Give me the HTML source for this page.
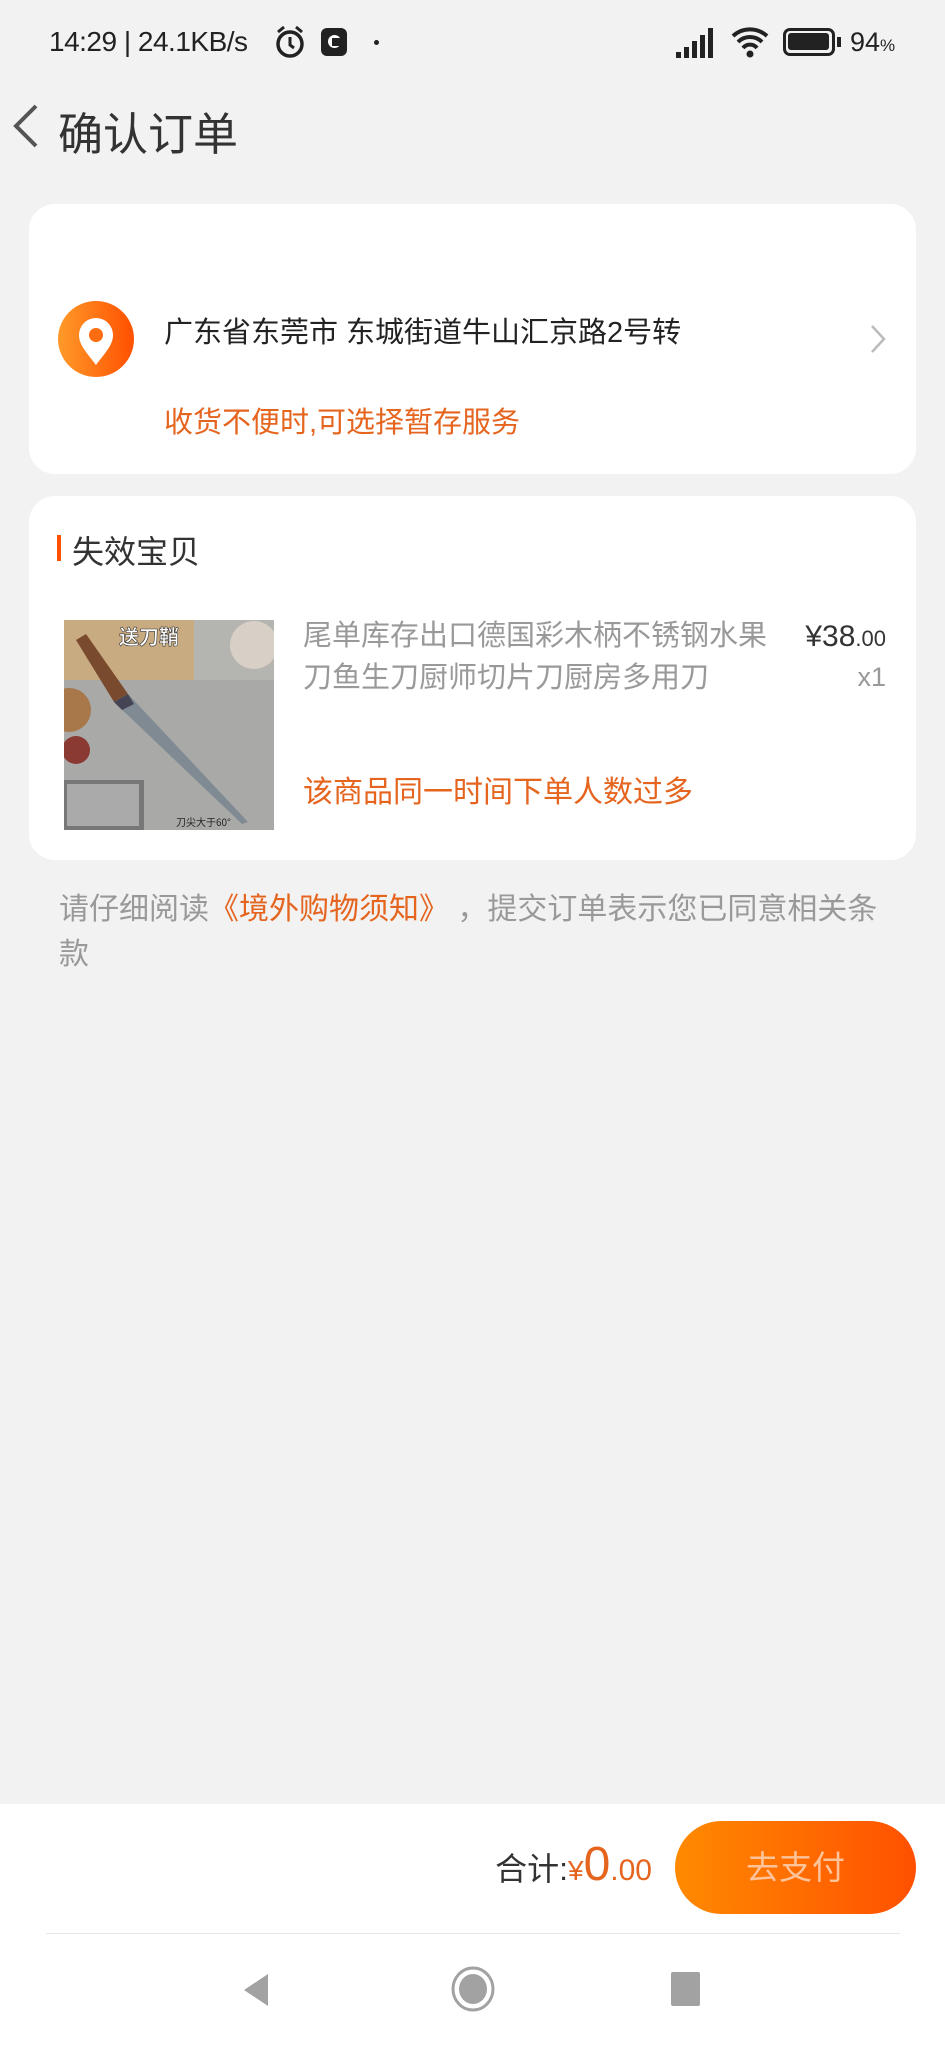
<!DOCTYPE html>
<html><head><meta charset="utf-8"><style>
*{margin:0;padding:0;box-sizing:border-box}
body{width:945px;height:2048px;background:#f2f2f2;font-family:"Liberation Sans","Noto Sans CJK SC",sans-serif;position:relative;overflow:hidden;color:#333}
.a{position:absolute;white-space:nowrap}
.card{position:absolute;left:29px;width:887px;background:#fff;border-radius:26px}
</style></head><body>
<div class="a" style="left:49px;top:26px;font-size:28px;color:#222;letter-spacing:-0.5px">14:29 | 24.1KB/s</div>
<svg class="a" style="left:272px;top:24px" width="40" height="36" viewBox="0 0 40 36"><circle cx="18" cy="20" r="12" fill="none" stroke="#222" stroke-width="3.5"/><path d="M18 13v8l4 3M6 8l6-5M30 8l-6-5" stroke="#222" stroke-width="3" fill="none"/></svg>
<div class="a" style="left:321px;top:28px;width:26px;height:28px;background:#222;border-radius:6px"><div style="position:absolute;left:7px;top:7px;width:13px;height:13px;border-radius:50%;background:#fff"></div><div style="position:absolute;left:11px;top:10px;width:9px;height:8px;background:#222"></div></div>
<div class="a" style="left:374px;top:40px;width:5px;height:5px;border-radius:50%;background:#222"></div>
<svg class="a" style="left:676px;top:28px" width="42" height="30" viewBox="0 0 42 30"><rect x="0" y="24" width="5" height="6" fill="#222"/><rect x="8" y="19" width="5" height="11" fill="#222"/><rect x="16" y="13" width="5" height="17" fill="#222"/><rect x="24" y="7" width="5" height="23" fill="#222"/><rect x="32" y="0" width="5" height="30" fill="#222"/></svg>
<svg class="a" style="left:730px;top:24px" width="40" height="36" viewBox="0 0 40 36"><path d="M3 12a25 25 0 0 1 34 0M8 18a17 17 0 0 1 24 0M13 24a9 9 0 0 1 14 0" stroke="#222" stroke-width="4" fill="none"/><circle cx="20" cy="30" r="3.5" fill="#222"/></svg>
<div class="a" style="left:783px;top:28px;width:52px;height:28px;border:3.5px solid #222;border-radius:7px"><div style="position:absolute;left:2px;top:2px;width:41px;height:17px;background:#222;border-radius:3px"></div></div>
<div class="a" style="left:837px;top:37px;width:4px;height:10px;background:#222"></div>
<div class="a" style="left:850px;top:27px;font-size:27px;color:#222">94<span style="font-size:17px">%</span></div>

<svg class="a" style="left:10px;top:102px" width="30" height="48" viewBox="0 0 30 48"><path d="M26 4L6 24l20 20" stroke="#555" stroke-width="4" fill="none"/></svg>
<div class="a" style="left:58px;top:98px;font-size:45px;color:#333">确认订单</div>

<div class="card" style="top:204px;height:270px"></div>
<svg class="a" style="left:57px;top:300px" width="78" height="78" viewBox="0 0 78 78"><defs><linearGradient id="g" x1="0" x2="1"><stop offset="0" stop-color="#ff9a2a"/><stop offset="1" stop-color="#ff5000"/></linearGradient></defs><circle cx="39" cy="39" r="38" fill="url(#g)"/><path d="M39 65C30 53 22 45 22 35a17 17 0 0 1 34 0c0 10-8 18-17 30z" fill="#fff"/><circle cx="39" cy="35" r="7" fill="#ff6d10"/></svg>
<div class="a" style="left:164px;top:309px;font-size:29px;color:#222">广东省东莞市 东城街道牛山汇京路2号转</div>
<svg class="a" style="left:869px;top:323px" width="18" height="32" viewBox="0 0 18 32"><path d="M3 3l12 13L3 29" stroke="#bbb" stroke-width="2.5" fill="none"/></svg>
<div class="a" style="left:164px;top:399px;font-size:29px;color:#e5651f">收货不便时,可选择暂存服务</div>

<div class="card" style="top:496px;height:364px"></div>
<div class="a" style="left:57px;top:535px;width:4px;height:26px;background:#ff5000"></div>
<div class="a" style="left:72px;top:527px;font-size:32px;color:#333">失效宝贝</div>
<svg class="a" style="left:64px;top:620px" width="210" height="210" viewBox="0 0 210 210"><rect width="210" height="210" fill="#b4b4b0"/><rect x="0" y="0" width="130" height="60" fill="#c9ab82"/><rect x="0" y="60" width="210" height="150" fill="#a9aaa8"/><circle cx="190" cy="25" r="24" fill="#d8cfc6"/><circle cx="5" cy="90" r="22" fill="#a8774a"/><circle cx="12" cy="130" r="14" fill="#8a3a32"/><path d="M12 20l10-6 42 60-14 8z" fill="#7a4a2e"/><path d="M50 82l14-8 120 128-6 2z" fill="#7f8a92"/><path d="M64 74l-14 8 8 8 12-6z" fill="#445"/><rect x="0" y="160" width="80" height="50" fill="#555" opacity=".6"/><rect x="3" y="164" width="72" height="42" fill="#ddd" opacity=".5"/><text x="55" y="24" font-size="20" fill="#fff" font-family="Noto Sans CJK SC" font-weight="bold" stroke="#333" stroke-width=".6">送刀鞘</text><text x="112" y="206" font-size="10" fill="#222" font-family="Noto Sans CJK SC">刀尖大于60°</text></svg>
<div class="a" style="left:303px;top:615px;font-size:29px;color:#999;line-height:42px">尾单库存出口德国彩木柄不锈钢水果<br>刀鱼生刀厨师切片刀厨房多用刀</div>
<div class="a" style="right:59px;top:620px;font-size:30px;color:#333">¥38<span style="font-size:22px">.00</span></div>
<div class="a" style="right:59px;top:662px;font-size:27px;color:#999">x1</div>
<div class="a" style="left:303px;top:767px;font-size:30px;color:#e5651f">该商品同一时间下单人数过多</div>

<div class="a" style="left:59px;top:887px;font-size:30px;color:#999;line-height:45px">请仔细阅读<span style="color:#e5651f">《境外购物须知》</span>&nbsp;，提交订单表示您已同意相关条<br>款</div>

<div class="a" style="left:0;top:1804px;width:945px;height:244px;background:#fff"></div>
<div class="a" style="right:293px;top:1844px;font-size:32px;color:#333">合计:<span style="color:#e5651f;font-size:28px">¥</span><span style="color:#e5651f;font-size:48px;line-height:40px">0</span><span style="color:#e5651f;font-size:30px">.00</span></div>
<div class="a" style="left:675px;top:1821px;width:241px;height:93px;border-radius:47px;background:linear-gradient(90deg,#ff8a00,#ff5000);color:#ffc39a;font-size:33px;text-align:center;line-height:93px">去支付</div>
<div class="a" style="left:46px;top:1933px;width:854px;height:1px;background:#e6e6e6"></div>
<svg class="a" style="left:240px;top:1970px" width="30" height="40" viewBox="0 0 30 40"><path d="M28 4v32L4 20z" fill="#a2a2a2"/></svg>
<svg class="a" style="left:450px;top:1965px" width="46" height="48" viewBox="0 0 46 48"><ellipse cx="23" cy="24" rx="20" ry="21" fill="none" stroke="#a2a2a2" stroke-width="3"/><ellipse cx="23" cy="24" rx="14" ry="15" fill="#a2a2a2"/></svg>
<div class="a" style="left:671px;top:1972px;width:29px;height:34px;background:#a2a2a2;border-radius:2px"></div>
</body></html>
